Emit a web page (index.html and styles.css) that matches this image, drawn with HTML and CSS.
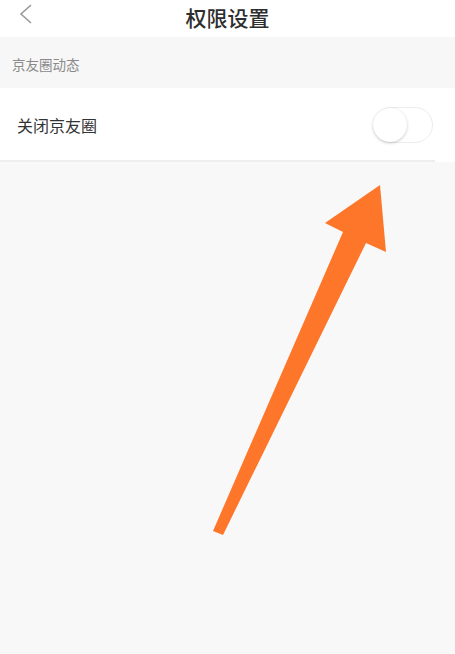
FILE: index.html
```html
<!DOCTYPE html>
<html lang="zh-CN">
<head>
	<meta charset="UTF-8">
	<title>权限设置</title>
	<link rel="stylesheet" href="styles.css">
</head>
<body>
	<header class="topbar">
		<svg class="back" width="14" height="20" viewBox="0 0 14 20">
			<polyline points="12,1 2,10 12,19" fill="none" stroke="#9a9a9a" stroke-width="1.6"/>
		</svg>
		<h1 class="title">权限设置</h1>
	</header>

	<div class="section-label">京友圈动态</div>

	<div class="row">
		<span class="row-text">关闭京友圈</span>
		<span class="switch"><span class="knob"></span></span>
	</div>

	<!-- pointer arrow drawn over the page -->
	<svg class="pointer" width="455" height="654" viewBox="0 0 455 654">
		<polygon points="380,185 386,252 366,243 223,535 213,531 343,232 325,223" fill="#fd7629"/>
	</svg>
</body>
</html>
```

FILE: styles.css
```css
body{
	margin: 0;
	background: #f8f8f8;
	font-family: "Noto Sans CJK SC", "Noto Sans", sans-serif;
	color: #333;
}

.topbar{
	position: relative;
	height: 37px;
	background: #fff;
	display: flex;
	align-items: center;
	justify-content: center;
}

.back{
	position: absolute;
	left: 19px;
	top: 4px;
}

.title{
	margin: 0;
	margin-top: -4px;
	font-size: 21px;
	font-weight: 500;
	color: #2e2e2e;
}

.section-label{
	height: 51px;
	padding-left: 12px;
	display: flex;
	align-items: center;
	padding-top: 3px;
	box-sizing: border-box;
	font-size: 13.5px;
	color: #8a8a8a;
	background: #f7f7f7;
}

/* the row's bottom rule stops 20px short of the right edge */
.row{
	height: 74px;
	background: #fff;
	display: flex;
	align-items: center;
	justify-content: space-between;
	padding: 2px 2px 0 17px;
	box-sizing: border-box;
	border-bottom: 2px solid #eeeeee;
	margin-right: 20px;
	box-shadow: 20px 0 0 #fff;
}

.row-text{
	font-size: 16px;
	color: #333;
}

.switch{
	width: 58px;
	height: 34px;
	border: 1px solid #ececec;
	border-radius: 18px;
	background: #fff;
	display: flex;
	align-items: center;
}

.knob{
	width: 34px;
	height: 34px;
	border-radius: 50%;
	background: #fff;
	box-shadow: 0 1px 3px rgba(0,0,0,0.22);
	margin-left: -1px;
}

.pointer{
	position: absolute;
	left: 0;
	top: 0;
}
```
